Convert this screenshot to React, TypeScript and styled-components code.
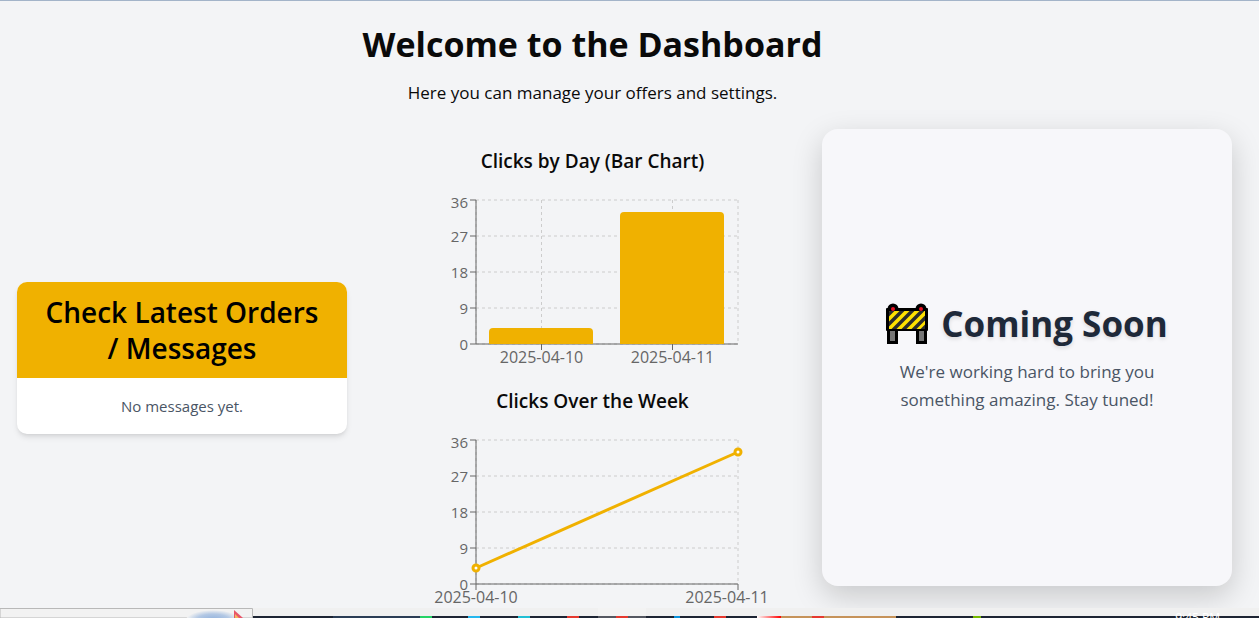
import React from "react";
import styled, { createGlobalStyle } from "styled-components";

const GlobalStyle = createGlobalStyle`
  * { box-sizing: border-box; margin: 0; }
  body {
    background: #f3f4f6;
    color: #0a0a0a;
    font-family: "Segoe UI", "Open Sans", "Noto Sans", sans-serif;
  }
`;

const Shell = styled.div`
  position: relative;
  display: flex;
  flex-direction: column;
  height: 100vh;
  overflow: hidden;
  border-top: 1px solid #a3b4c9;
`;

const Page = styled.main`
  flex: 1;
  min-height: 0;
  overflow: hidden;
`;

const Columns = styled.div`
  display: flex;
  align-items: center;
  padding: 0 27px 0 17px;
`;

const Messages = styled.section`
  flex: 0 1 330px;
  margin-right: 16px;
  border-radius: 10px;
  overflow: hidden;
  background: #fff;
  box-shadow: 0 4px 6px -1px rgba(0, 0, 0, 0.1), 0 2px 4px -2px rgba(0, 0, 0, 0.1);
  text-align: center;
`;

const MessagesTitle = styled.h2`
  padding: 12px 24px;
  background: #f0b100;
  color: #000;
  font-size: 28px;
  line-height: 36px;
  font-weight: 600;
`;

const MessagesEmpty = styled.p`
  padding: 16px;
  color: #4a5565;
  font-size: 15px;
  line-height: 24px;
`;

const Overview = styled.section`
  flex: 1;
  min-width: 0;
  display: flex;
  flex-direction: column;
  align-items: center;
  padding: 23px 0 87px;
  text-align: center;
`;

const Title = styled.h1`
  font-size: 34px;
  line-height: 40px;
  font-weight: 700;
  white-space: nowrap;
`;

const Lead = styled.p`
  margin: 15px 0 40px;
  font-size: 17px;
  line-height: 28px;
`;

const ChartTitle = styled.h3`
  font-size: 19px;
  line-height: 28px;
  font-weight: 600;
`;

const ChartBox = styled.svg`
  display: block;
  margin: 12px 0 20px;
  overflow: visible;
  font-size: 15px;
  fill: #666;
`;

const DayLabel = styled.text`
  font-size: 16px;
  text-anchor: middle;
`;

const Soon = styled.section`
  flex: 0 1 410px;
  min-height: 457px;
  display: flex;
  flex-direction: column;
  justify-content: center;
  padding: 32px 60px;
  border-radius: 16px;
  background: #f7f7fa;
  box-shadow: 0 10px 30px rgba(0, 0, 0, 0.18);
  text-align: center;
`;

const SoonTitle = styled.h2`
  display: flex;
  align-items: center;
  justify-content: center;
  gap: 13px;
  margin-bottom: 12px;
  color: #1e2939;
  font-size: 35px;
  line-height: 44px;
  font-weight: 700;
  white-space: nowrap;
  text-shadow: 0 2px 4px rgba(0, 0, 0, 0.12);
`;

const SoonText = styled.p`
  color: #4a5565;
  font-size: 17px;
  line-height: 28px;
`;

const Taskbar = styled.footer`
  position: relative;
  flex: 0 0 10px;
  overflow: hidden;
  background: #f0f0f0;
`;

const TaskIcons = styled.svg`
  display: block;
  width: 100%;
  height: 10px;
`;

const Clock = styled.time`
  position: absolute;
  right: 39px;
  top: 2px;
  color: #fff;
  font-size: 12px;
  line-height: 16px;
`;

const DATA = [
  { day: "2025-04-10", clicks: 4 },
  { day: "2025-04-11", clicks: 33 },
];
const TICKS = [0, 9, 18, 27, 36];
const LEFT = 63;
const RIGHT = 325;
const TOP = 13;
const BASE = 157;
const LABEL_LIMIT = 314;
const yOf = (v: number) => BASE - v * 4;

function Chart({ kind }: { kind: "bar" | "line" }) {
  const bar = kind === "bar";
  const xs = bar ? [128.5, 259.5] : [LEFT, RIGHT];
  const gridXs = Array.from(new Set([...xs, LEFT, RIGHT]));
  return (
    <ChartBox width="360" height="180" viewBox="0 0 360 180" role="img" aria-label="Clicks per day">
      <g stroke="#ccc" strokeDasharray="3 3">
        {TICKS.map((t) => (
          <line key={t} x1={LEFT} x2={RIGHT} y1={yOf(t)} y2={yOf(t)} />
        ))}
        {gridXs.map((x) => (
          <line key={x} x1={x} x2={x} y1={TOP} y2={BASE} />
        ))}
      </g>
      <path
        d={`M${LEFT} ${TOP}V${BASE}H${RIGHT}` + TICKS.map((t) => `M${LEFT - 6} ${yOf(t)}h6`).join("") + xs.map((x) => `M${x} ${BASE}v6`).join("")}
        fill="none"
        stroke="#666"
      />
      {TICKS.map((t) => (
        <text key={t} x={LEFT - 8} y={yOf(t) + (t === 36 ? 8 : 6)} textAnchor="end">{t}</text>
      ))}
      {DATA.map((d, i) => (
        <DayLabel key={d.day} x={Math.min(xs[i], LABEL_LIMIT)} y={BASE + 19}>{d.day}</DayLabel>
      ))}
      {bar ? (
        DATA.map((d, i) => {
          const x = Math.floor(xs[i]) - 52;
          const y = yOf(d.clicks);
          return <path key={d.day} fill="#f0b100" d={`M${x} ${BASE}V${y + 4}q0 -4 4 -4h96q4 0 4 4V${BASE}z`} />;
        })
      ) : (
        <g stroke="#f0b100" strokeWidth="3">
          <line x1={xs[0]} y1={yOf(4)} x2={xs[1]} y2={yOf(33)} />
          {DATA.map((d, i) => (
            <circle key={d.day} cx={xs[i]} cy={yOf(d.clicks)} r="3" fill="#fff" />
          ))}
        </g>
      )}
    </ChartBox>
  );
}

function Barrier() {
  return (
    <svg width="42" height="42" viewBox="0 0 42 42" aria-hidden="true">
      <defs>
        <clipPath id="board"><rect x="3" y="8" width="36" height="18" /></clipPath>
      </defs>
      <circle cx="7" cy="6" r="5.5" fill="#000" />
      <circle cx="35" cy="6" r="5.5" fill="#000" />
      <rect x="1" y="24" width="11" height="17" fill="#000" />
      <rect x="30" y="24" width="11" height="17" fill="#000" />
      <rect x="4" y="26" width="5" height="12" fill="#767676" />
      <rect x="33" y="26" width="5" height="12" fill="#767676" />
      <rect x="0" y="5" width="42" height="23" rx="1" fill="#000" />
      <rect x="3" y="8" width="36" height="18" fill="#ffe100" />
      <g clipPath="url(#board)" stroke="#2b2b2b" strokeWidth="3.5">
        <path d="M-4 18L12 2M-2 26L20 4M4 30L28 6M13 31L37 7M22 32L46 8M31 32L49 14" />
      </g>
      <circle cx="7" cy="6" r="2" fill="#e81123" />
      <circle cx="35" cy="6" r="2" fill="#e81123" />
    </svg>
  );
}

export default function App() {
  return (
    <>
      <GlobalStyle />
      <Shell>
        <Page>
          <Columns>
            <Messages>
              <MessagesTitle>Check Latest Orders / Messages</MessagesTitle>
              <MessagesEmpty>No messages yet.</MessagesEmpty>
            </Messages>
            <Overview>
              <Title>Welcome to the Dashboard</Title>
              <Lead>Here you can manage your offers and settings.</Lead>
              <ChartTitle>Clicks by Day (Bar Chart)</ChartTitle>
              <Chart kind="bar" />
              <ChartTitle>Clicks Over the Week</ChartTitle>
              <Chart kind="line" />
            </Overview>
            <Soon>
              <SoonTitle><Barrier />Coming Soon</SoonTitle>
              <SoonText>We're working hard to bring you something amazing. Stay tuned!</SoonText>
            </Soon>
          </Columns>
        </Page>
        <Taskbar>
          <TaskIcons viewBox="0 0 1259 10" preserveAspectRatio="none" aria-hidden="true">
            <defs>
              <radialGradient id="glow">
                <stop offset="0" stopColor="#8fb0dc" />
                <stop offset="0.6" stopColor="#b3c8e4" />
                <stop offset="1" stopColor="#f2f2f2" />
              </radialGradient>
              <linearGradient id="red"><stop stopColor="#fff" /><stop offset="1" stopColor="#f00" /></linearGradient>
            </defs>
            <rect x="253" y="8" width="1006" height="2" fill="#1d2433" />
            <rect x="333" y="8" width="87" height="2" fill="#2b3d55" />
            <rect x="598" y="0" width="48" height="8" fill="#f3f3f3" />
            <rect x="598" y="8" width="48" height="2" fill="#555861" />
            <rect x="420" y="8" width="12" height="2" fill="#25d366" />
            <rect x="468" y="8" width="12" height="2" fill="#25b7ee" />
            <rect x="518" y="8" width="12" height="2" fill="#21bfd4" />
            <rect x="567" y="8" width="12" height="2" fill="#e6392f" />
            <rect x="616" y="8" width="12" height="2" fill="#e6392f" />
            <rect x="674" y="8" width="6" height="2" fill="#0a92dc" />
            <rect x="714" y="8" width="12" height="2" fill="#e6392f" />
            <rect x="757" y="8" width="24" height="2" fill="url(#red)" />
            <rect x="781" y="8" width="115" height="2" fill="#c6935a" />
            <rect x="812" y="8" width="12" height="2" fill="#e6392f" />
            <rect x="973" y="8" width="8" height="2" fill="#76b900" />
            <path d="M0 .5H252.5V10H0z" fill="#f2f2f2" stroke="#b8b8b8" />
            <ellipse cx="213" cy="12" rx="27" ry="10" fill="url(#glow)" />
            <path d="M234 2l9 8h-9z" fill="#e8566a" />
            <path d="M235 6l4 4h-4z" fill="#f3b95f" />
          </TaskIcons>
          <Clock>9:45 PM</Clock>
        </Taskbar>
      </Shell>
    </>
  );
}
